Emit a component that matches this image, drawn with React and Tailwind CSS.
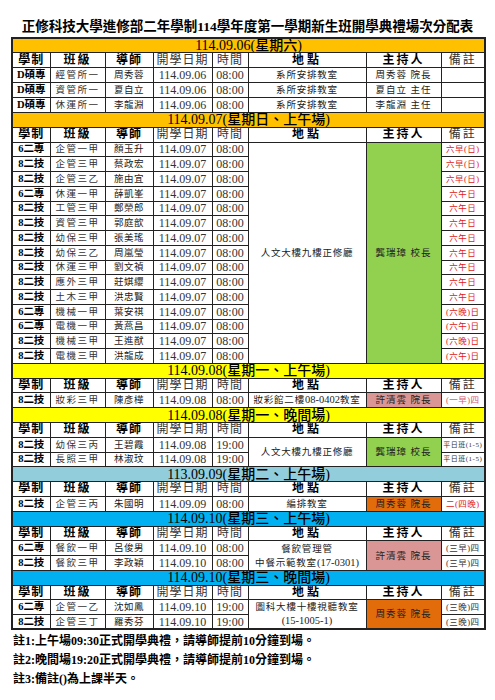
import React from "react";

const FONT = "font-['Liberation_Serif','Noto_Sans_CJK_TC',serif]";

const BARS = {
  orange: "bg-[#FFC000]",
  yellow: "bg-[#FFFF00]",
  lblue: "bg-[#92CDDC]",
  blue: "bg-[#00B0F0]",
};

const HOST = {
  white: "bg-white",
  green: "bg-[#92D050]",
  pink: "bg-[#DA9694]",
  orange: "bg-[#E26B0A]",
};

const NOTE = {
  red: "text-[#E02020]",
  pink: "text-[#D05A6A]",
  dark: "text-[#333]",
};

const sections = [
  {
    title: "114.09.06(星期六)",
    bar: "orange",
    rows: [
      { s: "D碩專", c: "經管所一", t: "周秀蓉", d: "114.09.06", tm: "08:00", loc: ["系所安排教室"], span: 1, host: "周秀蓉 院長", hb: "white", note: "" },
      { s: "D碩專", c: "資管所一", t: "夏自立", d: "114.09.06", tm: "08:00", loc: ["系所安排教室"], span: 1, host: "夏自立 主任", hb: "white", note: "" },
      { s: "D碩專", c: "休運所一", t: "李龍淵", d: "114.09.06", tm: "08:00", loc: ["系所安排教室"], span: 1, host: "李龍淵 主任", hb: "white", note: "" },
    ],
  },
  {
    title: "114.09.07(星期日、上午場)",
    bar: "orange",
    rows: [
      { s: "6二專", c: "企管一甲", t: "顏玉升", d: "114.09.07", tm: "08:00", loc: ["人文大樓九樓正修廳"], span: 15, host: "龔瑞璋 校長", hb: "green", note: "六早(日)", nc: "red" },
      { s: "8二技", c: "企管三甲", t: "蔡政宏", d: "114.09.07", tm: "08:00", note: "六早(日)", nc: "red" },
      { s: "8二技", c: "企管三乙", t: "施由宜", d: "114.09.07", tm: "08:00", note: "六早(日)", nc: "red" },
      { s: "6二專", c: "休運一甲", t: "薛凱峯", d: "114.09.07", tm: "08:00", note: "六午日", nc: "red" },
      { s: "8二技", c: "工管三甲", t: "鄭榮郎", d: "114.09.07", tm: "08:00", note: "六午日", nc: "red" },
      { s: "8二技", c: "資管三甲", t: "郭庭歆", d: "114.09.07", tm: "08:00", note: "六午日", nc: "red" },
      { s: "8二技", c: "幼保三甲", t: "張美瑤", d: "114.09.07", tm: "08:00", note: "六午日", nc: "red" },
      { s: "8二技", c: "幼保三乙", t: "周嵐瑩", d: "114.09.07", tm: "08:00", note: "六午日", nc: "red" },
      { s: "8二技", c: "休運三甲", t: "劉文禎", d: "114.09.07", tm: "08:00", note: "六午日", nc: "red" },
      { s: "8二技", c: "應外三甲", t: "莊娸纓", d: "114.09.07", tm: "08:00", note: "六午日", nc: "red" },
      { s: "8二技", c: "土木三甲", t: "洪忠賢", d: "114.09.07", tm: "08:00", note: "六午日", nc: "red" },
      { s: "6二專", c: "機械一甲", t: "葉安祺", d: "114.09.07", tm: "08:00", note: "(六晚)日", nc: "red" },
      { s: "6二專", c: "電機一甲", t: "黃燕昌", d: "114.09.07", tm: "08:00", note: "(六午)日", nc: "red" },
      { s: "8二技", c: "機械三甲", t: "王進猷", d: "114.09.07", tm: "08:00", note: "(六晚)日", nc: "red" },
      { s: "8二技", c: "電機三甲", t: "洪龍成", d: "114.09.07", tm: "08:00", note: "(六午)日", nc: "red" },
    ],
  },
  {
    title: "114.09.08(星期一、上午場)",
    bar: "yellow",
    rows: [
      { s: "8二技", c: "妝彩三甲", t: "陳彥樺", d: "114.09.08", tm: "08:00", loc: ["妝彩館二樓08-0402教室"], span: 1, host: "許清雲 院長", hb: "pink", note: "(一早)四", nc: "pink" },
    ],
  },
  {
    title: "114.09.08(星期一、晚間場)",
    bar: "yellow",
    rows: [
      { s: "8二技", c: "幼保三丙", t: "王碧霞", d: "114.09.08", tm: "19:00", loc: ["人文大樓九樓正修廳"], span: 2, host: "龔瑞璋 校長", hb: "green", note: "平日班(1-5)", nc: "dark", small: true },
      { s: "8二技", c: "長照三甲", t: "林淑玟", d: "114.09.08", tm: "19:00", note: "平日班(1-5)", nc: "dark", small: true },
    ],
  },
  {
    title: "113.09.09(星期二、上午場)",
    bar: "lblue",
    rows: [
      { s: "8二技", c: "企管三丙", t: "朱國明", d: "114.09.09", tm: "08:00", loc: ["編排教室"], span: 1, host: "周秀蓉 院長", hb: "orange", note: "二(四晚)", nc: "red" },
    ],
  },
  {
    title: "114.09.10(星期三、上午場)",
    bar: "blue",
    rows: [
      { s: "6二專", c: "餐飲一甲", t: "呂俊男", d: "114.09.10", tm: "08:00", loc: ["餐飲管理管", "中餐示範教室(17-0301)"], span: 2, host: "許清雲 院長", hb: "pink", note: "(三早)四", nc: "dark" },
      { s: "8二技", c: "餐飲三甲", t: "李政穎", d: "114.09.10", tm: "08:00", note: "(三早)四", nc: "dark" },
    ],
  },
  {
    title: "114.09.10(星期三、晚間場)",
    bar: "blue",
    rows: [
      { s: "6二專", c: "企管一乙", t: "沈如鳳", d: "114.09.10", tm: "19:00", loc: ["圖科大樓十樓視聽教室", "(15-1005-1)"], span: 2, host: "周秀蓉 院長", hb: "orange", note: "(三晚)四", nc: "dark" },
      { s: "8二技", c: "企管三丁", t: "羅秀芬", d: "114.09.10", tm: "19:00", note: "(三晚)四", nc: "dark" },
    ],
  },
];

const cell = "border border-[#222] p-0 text-center align-middle whitespace-nowrap overflow-hidden";

function Bar({ title, bar }) {
  return (
    <tr className="h-[14.75px]">
      <td colSpan={8} className={`${cell} ${BARS[bar]} text-[14px] leading-[13px] font-medium text-black`}>
        {title}
      </td>
    </tr>
  );
}

function Head() {
  const b = `${cell} text-[12px] leading-[13px]`;
  return (
    <tr className="h-[14.75px] bg-white">
      <td className={`${b} font-semibold tracking-[1px]`}>學制</td>
      <td className={`${b} font-semibold tracking-[2px]`}>班級</td>
      <td className={`${b} font-semibold tracking-[1px]`}>導師</td>
      <td className={`${b} tracking-[1px] text-[#333]`}>開學日期</td>
      <td className={`${b} tracking-[1px] text-[#333]`}>時間</td>
      <td className={`${b} font-semibold tracking-[3px]`}>地點</td>
      <td className={`${b} font-semibold tracking-[2px]`}>主持人</td>
      <td className={`${b} tracking-[2px] text-[#333]`}>備註</td>
    </tr>
  );
}

function Loc({ text }) {
  const parts = text.split(/([0-9()\-]+)/);
  return (
    <div>
      {parts.map((p, i) =>
        /[0-9]/.test(p) ? (
          <span key={i} className="text-[10.5px] tracking-[0px]">{p}</span>
        ) : (
          <span key={i}>{p}</span>
        )
      )}
    </div>
  );
}

function Row({ r }) {
  return (
    <tr className="h-[14.75px] bg-white">
      <td className={`${cell} text-[10.5px] leading-[12px] font-semibold`}>{r.s}</td>
      <td className={`${cell} text-[9.5px] leading-[12px] tracking-[1.5px] text-[#333]`}>{r.c}</td>
      <td className={`${cell} text-[9.5px] leading-[12px] tracking-[0.5px] text-[#222]`}>{r.t}</td>
      <td className={`${cell} text-[12px] leading-[12px] text-[#333]`}>{r.d}</td>
      <td className={`${cell} text-[12px] leading-[12px] text-[#333]`}>{r.tm}</td>
      {r.loc && (
        <td rowSpan={r.span} className={`${cell} text-[9.5px] leading-[14px] tracking-[0.8px] text-[#222]`}>
          {r.loc.map((l, i) => (
            <Loc key={i} text={l} />
          ))}
        </td>
      )}
      {r.host && (
        <td rowSpan={r.span} className={`${cell} ${HOST[r.hb]} text-[9.5px] leading-[12px] tracking-[1px] text-[#222]`}>
          {r.host}
        </td>
      )}
      <td className={`${cell} ${r.nc ? NOTE[r.nc] : ""} ${r.small ? "text-[7px]" : "text-[8.5px]"} leading-[12px] tracking-[0.5px]`}>
        {r.note}
      </td>
    </tr>
  );
}

export default function App() {
  return (
    <div className={`w-[495px] h-[700px] bg-white ${FONT} text-black`}>
      <div className="pt-[19px] h-[37px] text-center text-[13.5px] leading-[16px] font-bold">
        正修科技大學進修部二年學制114學年度第一學期新生班開學典禮場次分配表
      </div>
      <table className="ml-[11px] w-[473px] table-fixed border-collapse border-2 border-[#222]">
        <colgroup>
          <col className="w-[38px]" />
          <col className="w-[55px]" />
          <col className="w-[48px]" />
          <col className="w-[59px]" />
          <col className="w-[36px]" />
          <col className="w-[118px]" />
          <col className="w-[75px]" />
          <col className="w-[44px]" />
        </colgroup>
        <tbody>
          {sections.map((sec, i) => (
            <React.Fragment key={i}>
              <Bar title={sec.title} bar={sec.bar} />
              <Head />
              {sec.rows.map((r, j) => (
                <Row key={j} r={r} />
              ))}
            </React.Fragment>
          ))}
        </tbody>
      </table>
      <div className="pt-[2px] pl-[13px] text-[12px] leading-[19px] font-semibold">
        <div>註1:上午場09:30正式開學典禮，請導師提前10分鐘到場。</div>
        <div>註2:晚間場19:20正式開學典禮，請導師提前10分鐘到場。</div>
        <div>註3:備註()為上課半天。</div>
      </div>
    </div>
  );
}
